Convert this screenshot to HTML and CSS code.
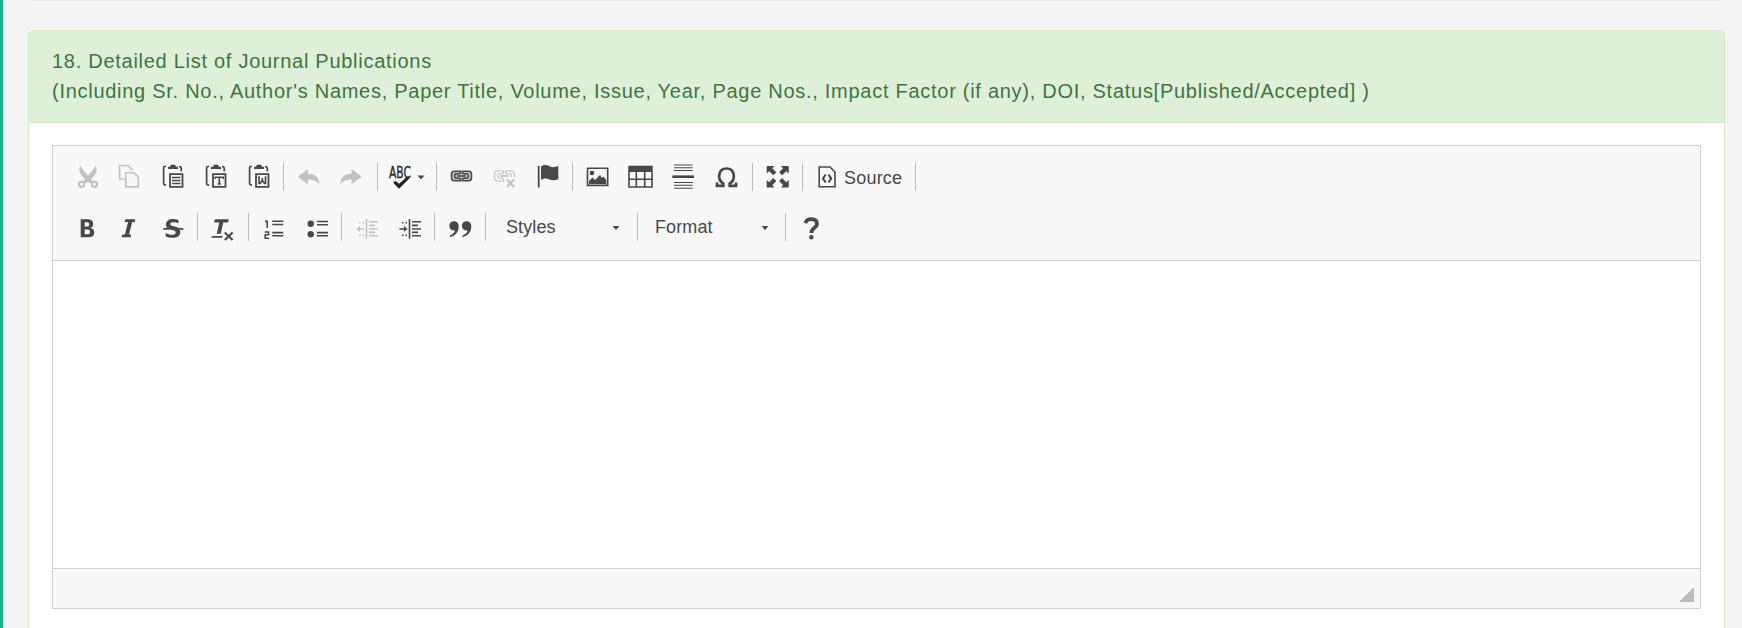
FILE: index.html
```html
<!DOCTYPE html>
<html lang="en">
<head>
<meta charset="utf-8">
<title>Journal Publications</title>
<link rel="stylesheet" href="styles.css">
</head>
<body>
<svg class="defs" aria-hidden="true">
  <symbol id="clipboard" viewBox="0 0 24 24" overflow="visible">
    <path d="M5 1.5H3.5Q2.6 1.5 2.6 3V18Q2.6 20 5 20.2" fill="none" stroke="currentColor" stroke-width="1.7"/>
    <path d="M18 1.5Q20.3 1.5 20.3 4V6.5" fill="none" stroke="currentColor" stroke-width="1.7"/>
    <path d="M7 4V1.7H9L10 -.2H14L15 1.7H17V4Z"/>
    <path d="M9 9.2H21.5V21.8H9Z" fill="none" stroke="currentColor" stroke-width="1.8"/>
  </symbol>
</svg>
<main class="page">
  <div class="previous"></div>
  <section class="panel">
    <header class="heading">18. Detailed List of Journal Publications<br>(Including Sr. No., Author's Names, Paper Title, Volume, Issue, Year, Page Nos., Impact Factor (if any), DOI, Status[Published/Accepted] )</header>
    <div class="editor">
      <div class="tools">
        <div class="row row-main">
          <svg class="icon off" viewBox="0 0 24 24"><path d="M4.2 .7 14 13.5 17 16.5 14.5 18.5 10 14.5C5 11 1.5 6 4.2 .7Z"/><path d="M19.8 .7 10 13.5 7 16.5 9.5 18.5 14 14.5C19 11 22.5 6 19.8 .7Z"/><circle cx="5.6" cy="19.3" r="2.6" class="line2"/><circle cx="18.4" cy="19.3" r="2.6" class="line2"/></svg>
          <svg class="icon off" viewBox="0 0 24 24"><path class="line" d="M7 14H2.6V.5H11L15.5 5M8.7 7.8H17L21.3 12.2V21.9H8.7Z"/></svg>
          <svg class="icon" viewBox="0 0 24 24"><use href="#clipboard"/><path class="line" d="M11 12.5H19.5M11 15.5H19.5M11 18.5H19.5"/></svg>
          <svg class="icon" viewBox="0 0 24 24"><use href="#clipboard"/><path class="line" d="M11.3 14V12.3H19.2V14M15.3 12.3V19M13.7 19H17"/></svg>
          <svg class="icon" viewBox="0 0 24 24"><use href="#clipboard"/><path class="line" d="M11 12.3H13M17.5 12.3H19.5M12 12.3V18.5H13L15.3 15.3 17.5 18.5H18.5V12.3M15.3 13V16"/></svg>
          <i class="sep"></i>
          <svg class="icon off" viewBox="0 0 24 24"><path d="M.7 11.8 11 4V8.8C18 8.8 22.3 12.3 22.3 19.3 19 15.2 16 14.5 11 14.5V19.3Z"/></svg>
          <svg class="icon off" viewBox="0 0 24 24"><path d="M22.7 11.8 12.5 4V8.8C5.5 8.8 1.3 12.3 1.3 19.3 4.5 15.2 7.5 14.5 12.5 14.5V19.3Z"/></svg>
          <i class="sep"></i>
          <svg class="icon wide dark" viewBox="0 0 40 24"><text class="abc" x="1" y="13.4" textLength="22" lengthAdjust="spacingAndGlyphs">ABC</text><path d="M5.2 17.8 7.6 15.7 11 18.8 18 12.7H22L11 23.8Z"/><path class="gray" d="M29.3 10.5H36.7L33 14.2Z"/></svg>
          <i class="sep"></i>
          <svg class="icon" viewBox="0 0 24 24"><rect class="soft" x="3" y="6.5" width="19" height="9" rx="3.5"/><path class="line" d="M11.5 8.5V6.2H5.5Q2.5 6.2 2.5 9V13Q2.5 15.8 5.5 15.8H11.5V13.5M13.5 8.5V6.2H19.5Q22.5 6.2 22.5 9V13Q22.5 15.8 19.5 15.8H13.5V13.5"/><path class="line" d="M11.5 8.8H6.7Q5.7 9 5.7 11T6.7 13.2H11.5M13.5 8.8H18.3Q19.3 9 19.3 11T18.3 13.2H13.5M8 11H17"/></svg>
          <svg class="icon off" viewBox="0 0 24 24"><path class="thin" d="M11.5 8.5V6H5.5Q2.5 6 2.5 9V13Q2.5 16 5.5 16H11.5V13.5M13.5 8.5V6H19.5Q22.5 6 22.5 9V12M11.5 8.8H7Q5.5 9 5.5 11T7 13.2H11.5M13.5 8.8H18Q19.5 9 19.5 12"/><path class="line" d="M8 11H16.5"/><path class="line2" d="M14.8 14.5 22.2 22M22.2 14.5 14.8 22"/></svg>
          <svg class="icon" viewBox="0 0 24 24"><path d="M1.8 1H3.6V22.5H1.8ZM5 1.5C8-.4 11-.2 13.5 1.2S18 2.5 22.3 1V14.3C18 15.7 15.5 15.2 13 14.2S8 13.2 5 15Z"/></svg>
          <i class="sep"></i>
          <svg class="icon" viewBox="0 0 24 24"><path class="line" d="M2.5 3.2H22.7V20.4H2.5Z"/><circle cx="7" cy="8" r="2.3"/><path d="M4 19V16L7.5 12.5 10 15 15 10 17 13 18.5 11.5 21.3 15V19Z"/></svg>
          <svg class="icon" viewBox="0 0 24 24"><path d="M.3 .7H24.7V7H.3Z"/><path class="line" d="M1 6V22H24V6M1 14.3H24M8.3 7V22M16.7 7V22"/></svg>
          <svg class="icon" viewBox="0 0 24 24"><path class="thin" d="M3 0H21.7M3 2.7H21.7M3 5.5H21.7M3 17.5H21.7M3 20.3H21.7M3 23.2H21.7"/><path d="M1.3 10.4H23V13H1.3Z"/></svg>
          <svg class="icon" viewBox="0 0 24 24"><path class="omega" d="M3 17.5V20.8H9.3V18.5C5.7 16.5 5 13 5.2 10.5 5.6 6 8.2 3.5 12.5 3.5S19.4 6 19.8 10.5C20 13 19.3 16.5 15.7 18.5V20.8H22V17.5"/></svg>
          <i class="sep"></i>
          <svg class="icon" viewBox="0 0 24 24"><path d="M1.7 1H9.5L7.3 3.2 11.3 7.3 8.3 10.3 4.2 6.2 1.7 8.5ZM23.7 1V8.5L21.2 6.2 17.1 10.3 14.1 7.3 18.1 3.2 15.9 1ZM1.7 22.4V14.9L4.2 17.2 8.3 13.1 11.3 16.1 7.3 20.2 9.5 22.4ZM23.7 22.4H15.9L18.1 20.2 14.1 16.1 17.1 13.1 21.2 17.2 23.7 14.9Z"/></svg>
          <i class="sep"></i>
          <svg class="icon" viewBox="0 0 24 24"><path class="line" d="M4.2 2H15L20 7V21.7H4.2Z"/><path class="line2" d="M10.7 9.5 8 13.5 10.7 17.5M13.5 9.5 16.2 13.5 13.5 17.5"/></svg>
          <span class="label">Source</span>
          <i class="sep"></i>
        </div>
        <div class="row row-format">
          <svg class="icon" viewBox="0 0 24 24"><path fill-rule="evenodd" d="M5.7 3.3H12.5Q18.2 3.3 18.2 7.8 18.2 11 15.3 11.9 19.3 12.7 19.3 16.4 19.3 21.3 13 21.3H5.7ZM9.7 6.3V10.6H12Q14.2 10.6 14.2 8.4T12 6.3ZM9.7 13.5V18.3H12.3Q15 18.3 15 15.9T12.3 13.5Z"/></svg>
          <svg class="icon" viewBox="0 0 24 24"><path d="M8.3 3.3H18.3L17.7 6H15.2L12 18.6H14.3L13.7 21.3H4.7L5.3 18.6H7.9L11.1 6H7.7Z"/></svg>
          <svg class="icon" viewBox="0 0 24 24"><path d="M17.5 3.9V7.3C14 5.7 9.2 5.7 9.2 8 9.2 9.5 11 9.9 13.8 10.5 17.5 11.3 19.3 12.8 19.3 16 19.3 20 16.2 21.8 11.5 21.8Q7.7 21.8 4.7 20.5V16.9C8.5 19.3 14.8 19.5 14.8 16.4 14.8 14.9 13 14.4 10.2 13.8 6.7 13 4.9 11.6 4.9 8.6 4.9 5 8 3 12 3Q15 3 17.5 3.9ZM2.3 12H22.3V13.8H2.3Z"/></svg>
          <i class="sep"></i>
          <svg class="icon" viewBox="0 0 24 24"><path d="M4.8 3.3H18.8L18.1 6.4H13.3L10.8 17.7H6.7L9.3 6.4H4.1ZM1.7 20H12.5V21.7H1.7Z"/><path class="line2" d="M14.8 16.5 22.6 24M22.6 16.5 14.8 24"/></svg>
          <i class="sep"></i>
          <svg class="icon" viewBox="0 0 24 24"><path class="line" d="M3 5.4H5.2V12M2.7 16H6.5V18.8H3.2V22.2H7M10.3 5.3H21.3M10.3 8.5H21.3M10.3 16.6H21.3M10.3 19.8H21.3"/></svg>
          <svg class="icon" viewBox="0 0 24 24"><circle cx="4.7" cy="7.7" r="3.2"/><circle cx="4.7" cy="18.2" r="3.2"/><path class="line" d="M11 5.5H22M11 8.7H22M11 16.6H22M11 19.8H22"/></svg>
          <i class="sep"></i>
          <svg class="icon off" viewBox="0 0 24 24"><path class="line" d="M11.5 3V22.7M14 5.8H23M14 9.4H20M14 13H23M14 16.4H20M14 19.8H23M3.5 13H9M4 6.8H5.5M7.5 6.8H9M4 19.4H5.5M7.5 19.4H9"/><path d="M1.4 13 5 9.9V16.1Z"/></svg>
          <svg class="icon" viewBox="0 0 24 24"><path class="line" d="M11.5 3V22.7M14 5.8H23M14 9.4H20M14 13H23M14 16.4H20M14 19.8H23M1.4 13H7M4 6.8H5.5M7.5 6.8H9M4 19.4H5.5M7.5 19.4H9"/><path d="M9.5 13 5.9 9.9V16.1Z"/></svg>
          <i class="sep"></i>
          <svg class="icon" viewBox="0 0 24 24"><path d="M6 5.3C9 5.3 10.7 7.3 10.7 10.5 10.7 15.8 7.5 19.8 2 21.3V19.5C5 18.3 6.7 16.5 6.9 14.2 3.8 15 1.3 13 1.3 10 1.3 7.2 3.3 5.3 6 5.3ZM18.6 5.3C21.6 5.3 23.3 7.3 23.3 10.5 23.3 15.8 20.1 19.8 14.6 21.3V19.5C17.6 18.3 19.3 16.5 19.5 14.2 16.4 15 13.9 13 13.9 10 13.9 7.2 15.9 5.3 18.6 5.3Z"/></svg>
          <i class="sep"></i>
          <span class="combo">Styles<svg class="caret" viewBox="0 0 8 4"><path d="M.5 0H7.5L4 4Z"/></svg></span>
          <i class="sep"></i>
          <span class="combo">Format<svg class="caret" viewBox="0 0 8 4"><path d="M.5 0H7.5L4 4Z"/></svg></span>
          <i class="sep"></i>
          <svg class="icon" viewBox="0 0 24 24"><path class="question" d="M6.7 7.2C7 4.2 9.5 3.2 12.5 3.2 16 3.2 18 5 18 8 18 12 12.4 11.8 12.4 17"/><circle cx="12.3" cy="21.2" r="2.2"/></svg>
        </div>
      </div>
      <div class="content"></div>
      <footer class="bottom"><svg class="grip" viewBox="0 0 15 15"><path d="M15 0V15H0Z"/></svg></footer>
    </div>
  </section>
</main>
</body>
</html>
```

FILE: styles.css
```css
* { box-sizing: border-box; }
body {
  margin: 0;
  height: 628px;
  overflow: hidden;
  background: #f4f4f4;
  font-family: "Liberation Sans", Arial, sans-serif;
}
.defs { display: none; }
.page {
  height: 628px;
  border-left: 3px solid #16b28e;
  box-shadow: inset 1px 0 #d4ece6;
  padding: 0 17px 0 25px;
}
.previous {
  height: 1px;
  margin: 0 3px 29px;
  background: #e5e5e5;
}
.panel {
  height: 610px;
  border: 1px solid #d6e9c6;
  border-radius: 5px;
  background: #fff;
  box-shadow: 0 1px 1px #e8e8e8;
}
.heading {
  height: 92px;
  padding: 15px 23px;
  border-bottom: 1px solid #d6e9c6;
  border-radius: 4px 4px 0 0;
  background: #dff0d8;
  color: #3c763d;
  font-size: 20px;
  line-height: 30px;
  letter-spacing: .724px;
  white-space: nowrap;
}
.editor {
  height: 464px;
  margin: 22px 23px 0;
  border: 1px solid #d1d1d1;
  display: flex;
  flex-direction: column;
}
.tools {
  height: 115px;
  padding-top: 17px;
  border-bottom: 1px solid #d1d1d1;
  background: #f8f8f8;
}
.row {
  display: grid;
  height: 50px;
  align-items: start;
  color: #484848;
}
.row-main {
  padding-left: 23px;
  grid-template-columns: 41px 44px 43px 43px 36px 14px 42px 38px 11px 48px 13px 43px 44px 36px 13px 43px 43px 43px 38px 13px 37px 13px 29px 71px 1px;
}
.row-format {
  padding-left: 22px;
  grid-template-columns: 42px 44px 36px 13px 38px 14px 44px 35px 14px 43px 36px 14px 37px 21px 131px 18px 130px 14px 24px;
}
.icon {
  width: 24px;
  height: 24px;
  margin-top: 2px;
  overflow: visible;
  fill: currentColor;
}
.row-format .icon { margin-top: 3px; }
.row .wide { width: 40px; }
.off { color: #c2c2c2; }
.dark { color: #222; }
.gray { fill: #484848; }
.soft { fill: #c4c4c4; }
.sep { width: 1px; height: 28px; background: #bcbcbc; }
.line, .line2, .thin, .omega, .question { fill: none; stroke: currentColor; }
.line { stroke-width: 1.6; }
.line2 { stroke-width: 2.1; }
.thin { stroke-width: 1.1; }
.omega { stroke-width: 2.7; }
.question { stroke-width: 3.8; }
.abc { font: 15px "DejaVu Sans", sans-serif; stroke: currentColor; stroke-width: .3; }
.label { margin-top: 1px; font-size: 18px; line-height: 28px; letter-spacing: .2px; }
.combo {
  width: 114px;
  display: flex;
  justify-content: space-between;
  align-items: center;
  font-size: 18px;
  line-height: 28px;
  letter-spacing: .1px;
}
.caret { width: 8px; height: 4px; fill: currentColor; margin-top: 2px; }
.content { flex: 1; background: #fff; }
.bottom {
  height: 40px;
  padding: 18px 6px 0 0;
  border-top: 1px solid #d1d1d1;
  background: #f8f8f8;
  display: flex;
  justify-content: flex-end;
}
.grip { width: 15px; height: 15px; fill: #bcbcbc; }
```
